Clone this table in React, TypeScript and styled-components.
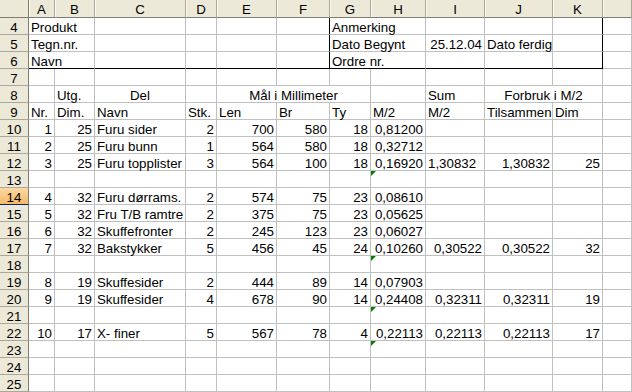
import * as React from 'react'
import styled, { createGlobalStyle, css } from 'styled-components'

const GlobalStyle = createGlobalStyle`
	html, body {
		margin: 0;
		padding: 0;
		background: #fff;
		overflow: hidden;
	}
	body {
		font-family: 'Liberation Sans', Arial, sans-serif;
		font-size: 13.3px;
		color: #000;
	}
`

// column L is only partly visible at the right edge, so its letter is off-screen
const COLS = ['A', 'B', 'C', 'D', 'E', 'F', 'G', 'H', 'I', 'J', 'K', '']
const WIDTHS = [26, 40, 91, 31, 60, 53, 41, 55, 59, 68, 50, 29]
const SELECTED_ROW = 14

type Align = 'l' | 'r' | 'c'
type CellDef = {
	v?: string
	a?: Align
	span?: number
	flag?: boolean
	boxRight?: boolean
	boxBottom?: boolean
}

const Sheet = styled.div`
	display: grid;
	grid-template-columns: 29px ${WIDTHS.map(w => `${w}px`).join(' ')};
	grid-template-rows: 18px repeat(22, 17px);
	width: 632px;
	overflow: hidden;
`

const headBase = css`
	box-sizing: border-box;
	background: #ece9d8;
	color: #000;
	text-align: center;
	line-height: 15px;
	white-space: nowrap;
`

const Corner = styled.div`
	${headBase};
	border-right: 1px solid #7f7d72;
	border-bottom: 1px solid #7f7d72;
`

const ColHead = styled.div`
	${headBase};
	padding-top: 2px;
	border-right: 1px solid #aca899;
	border-bottom: 1px solid #7f7d72;
	box-shadow: inset 1px 0 #fbfaf5;
`

const RowHead = styled.div<{ $selected?: boolean }>`
	${headBase};
	padding-top: 2px;
	border-right: 1px solid #7f7d72;
	border-bottom: 1px solid ${p => (p.$selected ? '#0a246a' : '#aca899')};
	background: ${p =>
		p.$selected ? 'linear-gradient(#fbd9a6, #f6b866)' : '#ece9d8'};
`

type CellProps = {
	$align: Align
	$span: number
	$flag?: boolean
	$boxRight?: boolean
	$boxBottom?: boolean
}
const Cell = styled.div<CellProps>`
	position: relative;
	box-sizing: border-box;
	grid-column: span ${p => p.$span};
	padding: 2px 2px 0 2px;
	line-height: 15px;
	white-space: nowrap;
	text-align: ${p =>
		p.$align === 'r' ? 'right' : p.$align === 'c' ? 'center' : 'left'};
	border-right: 1px solid ${p => (p.$boxRight ? '#000' : '#c0c0c0')};
	border-bottom: 1px solid ${p => (p.$boxBottom ? '#000' : '#c0c0c0')};

	${p =>
		p.$flag &&
		css`
			&::before {
				content: '';
				position: absolute;
				top: 0;
				left: 0;
				border-top: 5px solid #008000;
				border-right: 5px solid transparent;
			}
		`}
`

// short helpers for the row definitions
const r = (v: string): CellDef => ({ v, a: 'r' })
const l = (v: string): CellDef => ({ v, a: 'l' })
const e: CellDef = {}

const dataRow = (
	nr: string, dim: string, navn: string, stk: string,
	len: string, br: string, ty: string, m2: string,
	sum?: string, tot?: string, kdim?: string
): CellDef[] => [
	r(nr), r(dim), l(navn), r(stk), r(len), r(br), r(ty), r(m2),
	sum ? r(sum) : e, tot ? r(tot) : e, kdim ? r(kdim) : e, e,
]

const flagRow: CellDef[] = [e, e, e, e, e, e, e, { flag: true }, e, e, e, e]
const emptyRow: CellDef[] = COLS.map(() => e)

const ROWS: Record<number, CellDef[]> = {
	4: [
		{ v: 'Produkt', span: 2 }, e, e, e, { boxRight: true },
		{ v: 'Anmerking', span: 2 }, e, e, { boxRight: true }, e,
	],
	5: [
		{ v: 'Tegn.nr.', span: 2 }, e, e, e, { boxRight: true },
		{ v: 'Dato Begynt', span: 2 }, r('25.12.04'), l('Dato ferdig'),
		{ boxRight: true }, e,
	],
	6: [
		{ v: 'Navn', span: 2, boxBottom: true },
		{ boxBottom: true }, { boxBottom: true }, { boxBottom: true },
		{ boxBottom: true, boxRight: true },
		{ v: 'Ordre nr.', span: 2, boxBottom: true },
		{ boxBottom: true }, { boxBottom: true },
		{ boxBottom: true, boxRight: true }, e,
	],
	7: emptyRow,
	8: [
		e, l('Utg.'), { v: 'Del', a: 'c' }, e,
		{ v: 'Mål i Millimeter', a: 'c', span: 3 }, e, l('Sum'),
		{ v: 'Forbruk i M/2', a: 'c', span: 2 }, e,
	],
	9: ['Nr.', 'Dim.', 'Navn', 'Stk.', 'Len', 'Br', 'Ty', 'M/2', 'M/2', 'Tilsammen', 'Dim', '']
		.map(l),
	10: dataRow('1', '25', 'Furu sider', '2', '700', '580', '18', '0,81200'),
	11: dataRow('2', '25', 'Furu bunn', '1', '564', '580', '18', '0,32712'),
	12: [
		r('3'), r('25'), l('Furu topplister'), r('3'), r('564'), r('100'),
		r('18'), r('0,16920'), l('1,30832'), r('1,30832'), r('25'), e,
	],
	13: flagRow,
	14: dataRow('4', '32', 'Furu dørrams.', '2', '574', '75', '23', '0,08610'),
	15: dataRow('5', '32', 'Fru T/B ramtre', '2', '375', '75', '23', '0,05625'),
	16: dataRow('6', '32', 'Skuffefronter', '2', '245', '123', '23', '0,06027'),
	17: dataRow('7', '32', 'Bakstykker', '5', '456', '45', '24', '0,10260',
		'0,30522', '0,30522', '32'),
	18: flagRow,
	19: dataRow('8', '19', 'Skuffesider', '2', '444', '89', '14', '0,07903'),
	20: dataRow('9', '19', 'Skuffesider', '4', '678', '90', '14', '0,24408',
		'0,32311', '0,32311', '19'),
	21: flagRow,
	22: dataRow('10', '17', 'X- finer', '5', '567', '78', '4', '0,22113',
		'0,22113', '0,22113', '17'),
	23: flagRow,
	24: emptyRow,
	25: emptyRow,
}

export default function App() {
	const rowNumbers = Object.keys(ROWS).map(Number)
	return (
		<>
			<GlobalStyle />
			<Sheet>
				<Corner />
				{COLS.map((c, i) => (
					<ColHead key={i}>{c}</ColHead>
				))}
				{rowNumbers.map(n => (
					<React.Fragment key={n}>
						<RowHead $selected={n === SELECTED_ROW}>{n}</RowHead>
						{ROWS[n].map((cell, i) => (
							<Cell
								key={i}
								$align={cell.a ?? 'l'}
								$span={cell.span ?? 1}
								$flag={cell.flag}
								$boxRight={cell.boxRight}
								$boxBottom={cell.boxBottom}
							>
								{cell.v}
							</Cell>
						))}
					</React.Fragment>
				))}
			</Sheet>
		</>
	)
}
